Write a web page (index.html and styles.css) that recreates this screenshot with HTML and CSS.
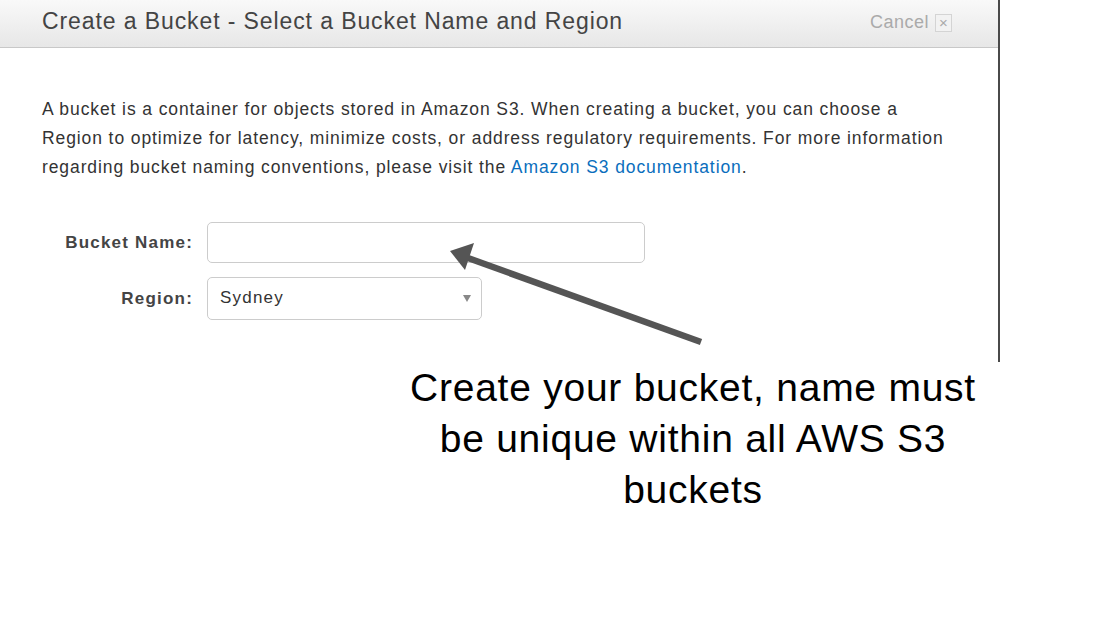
FILE: index.html
```html
<!DOCTYPE html>
<html lang="en">
<head>
  <meta charset="UTF-8">
  <title>Create a Bucket</title>
  <link rel="stylesheet" href="styles.css">
</head>
<body>
  <div class="page">
    <!-- Dialog -->
    <div class="dialog">
      <div class="dialog-header">
        <h1>Create a Bucket - Select a Bucket Name and Region</h1>
        <a class="cancel">Cancel <span class="close-box">&times;</span></a>
      </div>
      <div class="dialog-body">
        <p class="intro">A bucket is a container for objects stored in Amazon S3. When creating a bucket, you can choose a Region to optimize for latency, minimize costs, or address regulatory requirements. For more information regarding bucket naming conventions, please visit the <a href="#">Amazon S3 documentation</a>.</p>

        <div class="form-row">
          <label class="form-label">Bucket Name:</label>
          <div class="input name-input"></div>
        </div>
        <div class="form-row">
          <label class="form-label">Region:</label>
          <div class="input region-select">
            <span>Sydney</span>
            <span class="caret"></span>
          </div>
        </div>
      </div>
    </div>

    <!-- Annotation -->
    <svg class="arrow" width="1100" height="622" viewBox="0 0 1100 622">
      <line x1="701" y1="342" x2="468" y2="258" stroke="#555" stroke-width="6.5"/>
      <polygon points="450,251 474,243 465,270" fill="#555"/>
    </svg>
    <div class="note">Create your bucket, name must<br>be unique within all AWS S3<br>buckets</div>
  </div>
</body>
</html>
```

FILE: styles.css
```css
body {
  margin: 0;
  background: #ffffff;
  font-family: 'Liberation Sans', Arial, sans-serif;
}

.page {
  position: relative;
  width: 1100px;
  height: 622px;
  overflow: hidden;
}

/* Dialog panel */
.dialog {
  width: 998px;
  height: 362px;
  border-right: 2px solid #4a4a4a;
  background: #fff;
}

.dialog-header {
  height: 47px;
  display: flex;
  align-items: center;
  justify-content: space-between;
  padding: 0 46px 0 42px;
  background: linear-gradient(#f9f9f9, #e7e7e7);
  border-bottom: 1px solid #c8c8c8;
}

.dialog-header h1 {
  margin: 0;
  font-size: 23px;
  font-weight: normal;
  letter-spacing: 0.9px;
  color: #444;
  position: relative;
  top: -2px;
}

.cancel {
  display: flex;
  align-items: center;
  gap: 6px;
  color: #aaa;
  font-size: 18px;
  letter-spacing: 0.5px;
  position: relative;
  top: -1px;
}

.close-box {
  width: 15px;
  height: 16px;
  border: 1px solid #d4d4d4;
  background: #f2f2f2;
  font-size: 15px;
  line-height: 15px;
  letter-spacing: 0;
  text-align: center;
  color: #aaa;
}

.dialog-body {
  padding: 47px 42px 0;
}

.intro {
  margin: 0 0 40px;
  font-size: 17.5px;
  line-height: 29px;
  letter-spacing: 0.9px;
  color: #333;
}

.intro a {
  color: #0a6ebd;
  text-decoration: none;
}

.form-row {
  display: flex;
  align-items: center;
  margin-bottom: 14px;
}

.form-label {
  width: 151px;
  padding-right: 14px;
  text-align: right;
  font-size: 17px;
  font-weight: bold;
  letter-spacing: 1.2px;
  color: #444;
}

.input {
  box-sizing: border-box;
  border: 1px solid #ccc;
  border-radius: 5px;
  background: #fff;
}

.name-input {
  width: 438px;
  height: 41px;
}

.region-select {
  width: 275px;
  height: 43px;
  display: flex;
  align-items: center;
  justify-content: space-between;
  padding: 0 10px 0 12px;
  font-size: 17px;
  letter-spacing: 1.2px;
  color: #333;
}

.region-select span:first-child {
  position: relative;
  top: -1px;
}

.caret {
  width: 0;
  height: 0;
  border-left: 4px solid transparent;
  border-right: 4px solid transparent;
  border-top: 7px solid #888;
}

/* Annotation over the screenshot */
.arrow {
  position: absolute;
  left: 0;
  top: 0;
}

.note {
  position: absolute;
  left: 343px;
  top: 362px;
  width: 700px;
  text-align: center;
  font-size: 39px;
  line-height: 51px;
  letter-spacing: 0.75px;
  color: #000;
}
```
